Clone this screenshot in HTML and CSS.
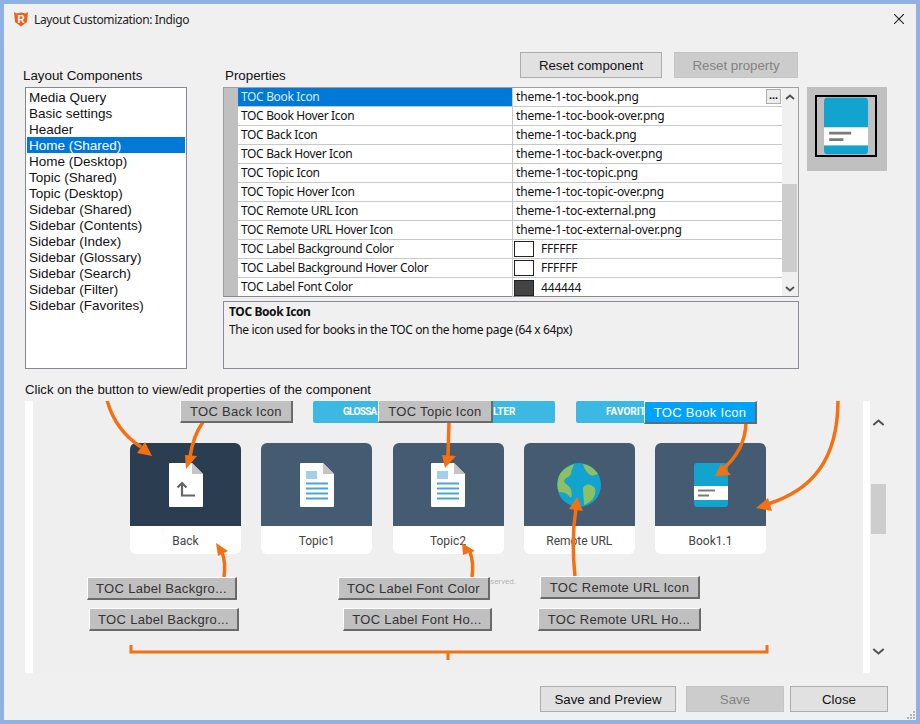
FILE: index.html
```html
<!DOCTYPE html>
<html lang="en">
<head>
<meta charset="utf-8">
<title>Layout Customization: Indigo</title>
<link rel="stylesheet" href="styles.css">
</head>
<body>
<svg class="defs" width="0" height="0" aria-hidden="true">
  <symbol id="doc" viewBox="0 0 34 44">
    <path d="M1 0H23L34 11V43a1 1 0 0 1-1 1H1a1 1 0 0 1-1-1V1a1 1 0 0 1 1-1Z" fill="#fff"/>
    <path d="M23 0L34 11H23Z" fill="#c4c4c4"/>
    <rect x="6" y="8" width="11" height="8" fill="#a4cfec"/>
    <path d="M6 20.500H28M6 25.500H28M6 30.500H28M6 35.500H28" stroke="#4da3d6" stroke-width="2"/>
  </symbol>
  <symbol id="book" viewBox="0 0 34 44">
    <rect width="34" height="44" rx="3" fill="#12a4cf"/>
    <rect y="23" width="34" height="14" fill="#fff"/>
    <path d="M4 27.500H21M4 32.500H15" stroke="#7a7a7a" stroke-width="2"/>
  </symbol>
</svg>
<div class="window">
  <header class="titlebar">
    <svg class="appicon" viewBox="0 0 16 16">
      <path d="M1 1L3.500 2.500L8 1.500L12.500 2.500L15 1L14 11L8 15.500L2 11Z" fill="#e8621c"/>
      <text x="8" y="11.500" text-anchor="middle" class="appicon-r">R</text>
    </svg>
    <span class="title">Layout Customization: Indigo</span>
    <svg class="closex" viewBox="0 0 10 10"><path d="M0 0L10 10M10 0L0 10" stroke="#222" stroke-width="1.100"/></svg>
  </header>

  <main class="panels">
    <div class="label comp-label">Layout Components</div>
    <div class="prop-head">
      <div class="label">Properties</div>
      <div class="actions">
        <button class="btn btn-rc">Reset component</button>
        <button class="btn btn-rp off">Reset property</button>
      </div>
    </div>

    <ul class="list">
      <li>Media Query</li>
      <li>Basic settings</li>
      <li>Header</li>
      <li class="sel">Home (Shared)</li>
      <li>Home (Desktop)</li>
      <li>Topic (Shared)</li>
      <li>Topic (Desktop)</li>
      <li>Sidebar (Shared)</li>
      <li>Sidebar (Contents)</li>
      <li>Sidebar (Index)</li>
      <li>Sidebar (Glossary)</li>
      <li>Sidebar (Search)</li>
      <li>Sidebar (Filter)</li>
      <li>Sidebar (Favorites)</li>
    </ul>

    <div class="center">
      <div class="grid">
        <div class="gutter"></div>
        <div class="rows">
          <div class="row"><div class="name sel">TOC Book Icon</div><div class="val">theme-1-toc-book.png<span class="dots">...</span></div></div>
          <div class="row"><div class="name">TOC Book Hover Icon</div><div class="val">theme-1-toc-book-over.png</div></div>
          <div class="row"><div class="name">TOC Back Icon</div><div class="val">theme-1-toc-back.png</div></div>
          <div class="row"><div class="name">TOC Back Hover Icon</div><div class="val">theme-1-toc-back-over.png</div></div>
          <div class="row"><div class="name">TOC Topic Icon</div><div class="val">theme-1-toc-topic.png</div></div>
          <div class="row"><div class="name">TOC Topic Hover Icon</div><div class="val">theme-1-toc-topic-over.png</div></div>
          <div class="row"><div class="name">TOC Remote URL Icon</div><div class="val">theme-1-toc-external.png</div></div>
          <div class="row"><div class="name">TOC Remote URL Hover Icon</div><div class="val">theme-1-toc-external-over.png</div></div>
          <div class="row"><div class="name">TOC Label Background Color</div><div class="val color"><i class="swatch"></i>FFFFFF</div></div>
          <div class="row"><div class="name">TOC Label Background Hover Color</div><div class="val color"><i class="swatch"></i>FFFFFF</div></div>
          <div class="row"><div class="name">TOC Label Font Color</div><div class="val color"><i class="swatch dark"></i>444444</div></div>
        </div>
        <div class="vscroll grid-scroll">
          <svg class="chev" viewBox="0 0 10 6"><path d="M1 5L5 1.500L9 5" fill="none" stroke="#505050" stroke-width="1.800"/></svg>
          <div class="thumb grid-thumb"></div>
          <svg class="chev" viewBox="0 0 10 6"><path d="M1 1L5 4.500L9 1" fill="none" stroke="#505050" stroke-width="1.800"/></svg>
        </div>
      </div>
      <div class="desc">
        <strong>TOC Book Icon</strong>
        <p>The icon used for books in the TOC on the home page (64 x 64px)</p>
      </div>
    </div>

    <div class="preview">
      <div class="preview-frame">
        <svg class="preview-book" viewBox="0 0 34 44"><use href="#book"/></svg>
      </div>
    </div>
  </main>

  <div class="hint">Click on the button to view/edit properties of the component</div>

  <section class="canvas">
    <div class="strip"></div>
    <div class="stage">
      <div class="nav">
        <div class="navbtn nav-a">GLOSSA</div>
        <div class="navbtn nav-b">LTER</div>
        <div class="navbtn nav-c">FAVORIT</div>
      </div>
      <div class="cards">
        <article class="card back">
          <div class="thumbarea">
            <svg class="ico" viewBox="0 0 34 44">
              <path d="M1 0H23L34 11V43a1 1 0 0 1-1 1H1a1 1 0 0 1-1-1V1a1 1 0 0 1 1-1Z" fill="#fff"/>
              <path d="M23 0L34 11H23Z" fill="#c4c4c4"/>
              <path d="M13 21V32.500H26M8.500 24.500L13 20L17.500 24.500" fill="none" stroke="#666" stroke-width="2.200"/>
            </svg>
          </div>
          <div class="cap">Back</div>
        </article>
        <article class="card">
          <div class="thumbarea"><svg class="ico" viewBox="0 0 34 44"><use href="#doc"/></svg></div>
          <div class="cap">Topic1</div>
        </article>
        <article class="card">
          <div class="thumbarea"><svg class="ico" viewBox="0 0 34 44"><use href="#doc"/></svg></div>
          <div class="cap">Topic2</div>
        </article>
        <article class="card">
          <div class="thumbarea">
            <svg class="globe" viewBox="0 0 44 44">
              <circle cx="22" cy="22" r="22" fill="#12a4cf"/>
              <path d="M17 1C13 3 7 5 3 11C0 17 0 24 2 29C6 29 10 30 13 34C15 36 15 31 14 27C13 22 8 22 7 18C8 14 14 14 14 10C14 7 16 5 17 1Z" fill="#8cc063"/>
              <path d="M26 1C27 5 29 9 33 12C36 13 38 12 41 11C37 5 32 2 26 1Z" fill="#8cc063"/>
              <path d="M26 25C29 20 34 21 38 25C39 29 38 33 35 37C32 39 30 41 27 42C27 36 26 31 26 25Z" fill="#8cc063"/>
            </svg>
          </div>
          <div class="cap">Remote URL</div>
        </article>
        <article class="card">
          <div class="thumbarea"><svg class="ico" viewBox="0 0 34 44"><use href="#book"/></svg></div>
          <div class="cap">Book1.1</div>
        </article>
      </div>
      <span class="fine">served.</span>

      <svg class="arrows" viewBox="33 401 830 272">
        <g fill="none" stroke="#f57010" stroke-width="3.500">
          <path d="M107 400Q115 430 141 447"/>
          <path d="M203 422Q193 436 190 457"/>
          <path d="M449 422L448 456"/>
          <path d="M746 423Q745 450 723 469"/>
          <path d="M838 400C838 460 812 490 768 504"/>
          <path d="M224 577Q226 563 222 552"/>
          <path d="M472 577Q474 563 470 552"/>
          <path d="M575 576Q571 540 576 508"/>
          <path d="M131 645V652H767V645M448 652V660" stroke-width="3"/>
        </g>
        <g fill="#f57010">
          <path d="M145 442L152 456L137 453Z"/>
          <path d="M197 456L186 469L185 455Z"/>
          <path d="M442 455L456 456L445 468Z"/>
          <path d="M721 464L731 475L715 476Z"/>
          <path d="M768 498L772 511L756 508Z"/>
          <path d="M228 551L216 543L218 556Z"/>
          <path d="M475 551L462 543L463 555Z"/>
          <path d="M569 509L577 497L583 511Z"/>
        </g>
      </svg>

      <button class="tag t-back">TOC Back Icon</button>
      <button class="tag t-topic">TOC Topic Icon</button>
      <button class="tag t-book active">TOC Book Icon</button>
      <button class="tag t-lb1">TOC Label Backgro...</button>
      <button class="tag t-lb2">TOC Label Backgro...</button>
      <button class="tag t-lf1">TOC Label Font Color</button>
      <button class="tag t-lf2">TOC Label Font Ho...</button>
      <button class="tag t-ru1">TOC Remote URL Icon</button>
      <button class="tag t-ru2">TOC Remote URL Ho...</button>
    </div>
    <div class="strip strip-r"></div>
    <div class="vscroll canvas-scroll">
      <svg class="chev big" viewBox="0 0 10 6"><path d="M1 5L5 1.500L9 5" fill="none" stroke="#505050" stroke-width="1.500"/></svg>
      <div class="thumb canvas-thumb"></div>
      <svg class="chev big" viewBox="0 0 10 6"><path d="M1 1L5 4.500L9 1" fill="none" stroke="#505050" stroke-width="1.500"/></svg>
    </div>
  </section>

  <footer class="footer">
    <button class="btn btn-sp">Save and Preview</button>
    <button class="btn btn-s off">Save</button>
    <button class="btn btn-c">Close</button>
    <svg class="grip" viewBox="0 0 9 9"><path d="M7 1h2v2H7zM4 4h2v2H4zM7 4h2v2H7zM1 7h2v2H1zM4 7h2v2H4zM7 7h2v2H7z" fill="#b5b5b5"/></svg>
  </footer>
</div>
</body>
</html>
```

FILE: styles.css
```css
* { box-sizing: border-box; }
html, body { margin: 0; height: 100%; }
body {
  background: #8fb2e2;
  padding: 4px;
  font-family: "Liberation Sans", Arial, sans-serif;
  color: #111;
  overflow: hidden;
}
.defs { position: absolute; }
.window {
  width: 912px;
  height: 716px;
  background: #f0f0f0;
  display: flex;
  flex-direction: column;
  position: relative;
}

/* title bar */
.titlebar {
  height: 30px;
  display: flex;
  align-items: center;
  padding-left: 9px;
  flex: none;
}
.appicon { width: 16px; height: 16px; margin-right: 5px; }
.appicon-r { font: bold 10px "Liberation Sans", sans-serif; fill: #fff; }
.title { font: 12px "Noto Sans", sans-serif; letter-spacing: -.36px; color: #222; }
.closex { width: 10px; height: 10px; margin-left: auto; margin-right: 12px; }

/* upper panels */
.panels {
  margin-top: 18px;
  padding-left: 21px;
  display: grid;
  grid-template-columns: 162px 36px 576px 8px 80px;
  grid-template-rows: 35px 282px;
  flex: none;
}
.comp-label { grid-column: 1; grid-row: 1; align-self: end; margin-left: -2px; padding-bottom: 4px; }
.prop-head {
  grid-column: 3;
  grid-row: 1;
  display: flex;
  justify-content: space-between;
  align-items: flex-start;
}
.prop-head .label { padding: 16px 0 0 2px; }
.label { font-size: 13.330px; line-height: 15px; color: #111; }
.actions { display: flex; gap: 12px; margin-right: 1px; }

.btn {
  height: 26px;
  border: 1px solid #adadad;
  background: #e1e1e1;
  font: 13.300px "Liberation Sans", sans-serif;
  color: #111;
  padding: 0;
}
.btn.off { background: #cccccc; color: #838383; border-color: #c4c4c4; }
.btn-rc { width: 142px; }
.btn-rp { width: 124px; }

.list {
  grid-column: 1;
  grid-row: 2;
  list-style: none;
  margin: 0;
  padding: 1px;
  background: #fff;
  border: 1px solid #828790;
  font-size: 13.500px;
}
.list li { height: 16px; line-height: 17px; padding-left: 2px; }
.list li.sel { background: #0078d7; color: #fff; }

.center { grid-column: 3; grid-row: 2; display: flex; flex-direction: column; gap: 4px; }
.grid {
  height: 210px;
  border: 1px solid #a0a0a0;
  border-bottom-color: #8a8a8a;
  display: flex;
  background: #f0f0f0;
}
.gutter { width: 14px; background: #c0c0c0; flex: none; }
.rows { width: 544px; flex: none; background: #fff; }
.row { height: 19px; display: flex; border-bottom: 1px solid #c8c8c8; }
.row:last-child { border-bottom: 0; }
.name, .val {
  font: 12px/18px "Noto Sans", sans-serif;
  color: #111;
  padding-left: 3px;
  white-space: nowrap;
}
.name { width: 275px; border-right: 1px solid #c8c8c8; flex: none; letter-spacing: -.34px; }
.name.sel { background: #0078d7; color: #d8ecfb; }
.val { flex: 1; position: relative; letter-spacing: -.17px; }
.val.color { display: flex; align-items: center; padding-left: 1px; }
.swatch {
  width: 20px;
  height: 16px;
  background: #fff;
  border: 1px solid #222;
  margin-right: 7px;
  flex: none;
}
.swatch.dark { background: #444; }
.dots {
  position: absolute;
  right: 1px;
  top: 1px;
  width: 15px;
  height: 15px;
  background: #ececec;
  border: 1px solid #adadad;
  font: bold 11px/11px "Liberation Sans", sans-serif;
  letter-spacing: 0;
  text-align: center;
}
.vscroll { display: flex; flex-direction: column; align-items: center; background: #f0f0f0; }
.grid-scroll { flex: 1; position: relative; }
.chev { width: 10px; height: 6px; flex: none; }
.thumb { background: #cdcdcd; align-self: stretch; flex: none; }
.grid-scroll .chev:first-child { margin-top: 6px; }
.grid-thumb { height: 88px; margin: 84px 1px 14px 0; }

.desc {
  height: 68px;
  border: 1px solid #8a8a95;
  padding: 1px 5px;
  font: 12px/18px "Noto Sans", sans-serif;
  color: #111;
}
.desc strong { display: block; letter-spacing: -.4px; }
.desc p { margin: 0; letter-spacing: -.38px; }

.preview {
  grid-column: 5;
  grid-row: 2;
  height: 84px;
  background: #c0c0c0;
  padding: 8px 0 0 8px;
}
.preview-frame {
  width: 62px;
  height: 62px;
  border: 2px solid #000;
  display: flex;
  align-items: flex-start;
  justify-content: center;
}
.preview-book { width: 44px; height: 58px; }

.hint {
  margin: 13px 0 0 21px;
  height: 19px;
  font-size: 13.160px;
  line-height: 15px;
  flex: none;
}

/* customizable preview canvas */
.canvas {
  margin-left: 21px;
  width: 862px;
  height: 272px;
  display: flex;
  flex: none;
  background: #efefef;
}
.strip { width: 8px; background: #fff; flex: none; }
.strip-r { width: 7px; }
.stage { width: 830px; position: relative; overflow: hidden; flex: none; }
.nav { display: flex; height: 22px; padding-left: 280px; }
.navbtn {
  background: #3cb9e2;
  color: #fff;
  font: bold 10px/22px "Roboto", sans-serif;
  white-space: nowrap;
  flex: none;
}
.nav-a { width: 65px; padding-left: 30px; letter-spacing: -.7px; border-radius: 2px 0 0 2px; }
.nav-b { width: 62px; margin-left: 115px; border-radius: 0 2px 2px 0; }
.nav-c { width: 69px; margin-left: 21px; padding-left: 30px; border-radius: 2px 0 0 2px; }
.cards { display: flex; gap: 20.250px; margin: 20px 0 0 97px; }
.card {
  width: 111px;
  height: 111px;
  background: #fff;
  border-radius: 6px;
  overflow: hidden;
  flex: none;
}
.thumbarea {
  height: 83px;
  background: #445b71;
  display: flex;
  align-items: flex-start;
  justify-content: center;
  padding-top: 20px;
}
.card.back .thumbarea { background: #2b3d50; }
.ico { width: 34px; height: 44px; }
.globe { width: 44px; height: 44px; }
.cap {
  text-align: center;
  font: 12px/30px "Roboto", sans-serif;
  color: #444;
}
.fine {
  position: absolute;
  left: 457px;
  top: 176px;
  font: 8px/10px "Roboto", sans-serif;
  color: #b5b5b5;
}
.arrows { position: absolute; left: 0; top: 0; width: 830px; height: 272px; }

.tag {
  position: absolute;
  height: 23px;
  padding: 0;
  background: #c0c0c0;
  border: 1px solid;
  border-color: #fff #6a6a6a #6a6a6a #fff;
  border-width: 1px 2px 2px 1px;
  font: 13px "Liberation Sans", sans-serif;
  letter-spacing: .3px;
  color: #333;
  white-space: nowrap;
}
.tag.active { background: #00a2ff; color: #fff; }
.t-back { left: 147px; top: -1px; width: 113px; }
.t-topic { left: 345px; top: -1px; width: 115px; }
.t-book { left: 611px; top: 0; width: 113px; }
.t-lb1 { left: 54px; top: 176px; width: 150px; }
.t-lb2 { left: 56px; top: 207px; width: 150px; }
.t-lf1 { left: 305px; top: 176px; width: 152px; }
.t-lf2 { left: 310px; top: 207px; width: 149px; }
.t-ru1 { left: 507px; top: 175px; width: 160px; }
.t-ru2 { left: 505px; top: 207px; width: 163px; }

.canvas-scroll { flex: 1; }
.chev.big { width: 13px; height: 9px; }
.canvas-scroll .chev:first-child { margin-top: 17px; }
.canvas-thumb { height: 50px; margin: 57px 1px 113px 1px; }

/* footer */
.footer {
  margin-top: 13px;
  padding-left: 536px;
  display: flex;
  position: relative;
}
.btn-sp { width: 136px; }
.btn-s { width: 98px; margin-left: 10px; }
.btn-c { width: 98px; margin-left: 6px; }
.grip { position: absolute; right: 1px; bottom: -7px; width: 9px; height: 9px; }
```
